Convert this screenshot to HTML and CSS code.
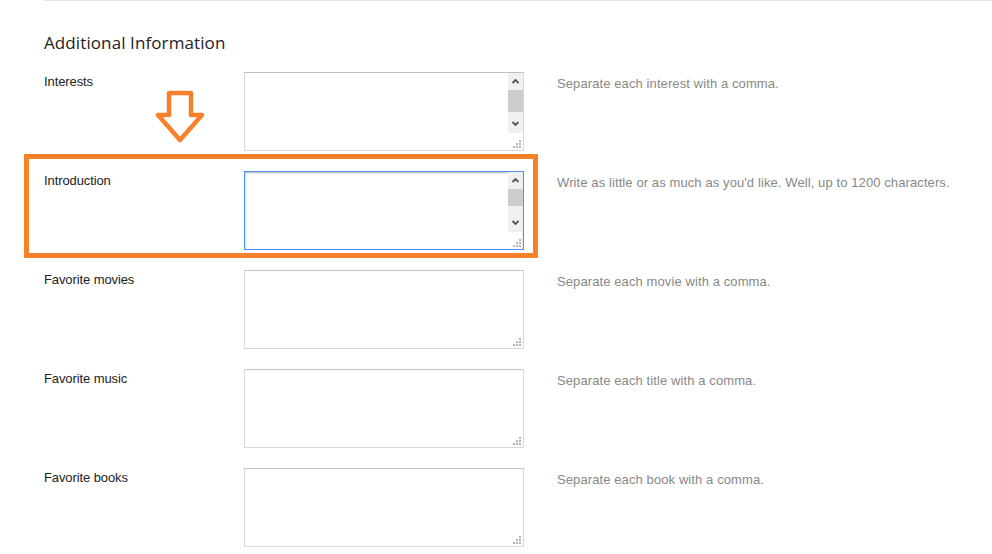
FILE: index.html
```html
<!DOCTYPE html>
<html lang="en">
<head>
    <meta charset="UTF-8">
    <title>Additional Information</title>
    <link rel="stylesheet" href="styles.css">
</head>
<body>
<div class="page">
    <div class="rule"></div>
    <h2 class="section-title">Additional Information</h2>

    <div class="form">
        <div class="row">
            <label class="label" for="interests">Interests</label>
            <div class="field">
                <textarea class="input" id="interests"></textarea>
                <span class="scrollbar">
                    <svg class="chevron" width="7" height="5" viewBox="0 0 7 5"><polyline points="0.5,4 3.5,1 6.5,4"/></svg>
                    <span class="thumb thumb-tall"></span>
                    <svg class="chevron chevron-down" width="7" height="5" viewBox="0 0 7 5"><polyline points="0.5,1 3.5,4 6.5,1"/></svg>
                </span>
                <svg class="grip" width="8" height="8" viewBox="0 0 8 8"><rect x="6" y="0" width="2" height="2"/><rect x="3" y="3" width="2" height="2"/><rect x="6" y="3" width="2" height="2"/><rect x="0" y="6" width="2" height="2"/><rect x="3" y="6" width="2" height="2"/><rect x="6" y="6" width="2" height="2"/></svg>
            </div>
            <div class="hint">Separate each interest with a comma.</div>
        </div>

        <div class="row">
            <label class="label" for="intro">Introduction</label>
            <div class="field">
                <textarea class="input is-focused" id="intro"></textarea>
                <span class="scrollbar">
                    <svg class="chevron" width="7" height="5" viewBox="0 0 7 5"><polyline points="0.5,4 3.5,1 6.5,4"/></svg>
                    <span class="thumb"></span>
                    <svg class="chevron chevron-down" width="7" height="5" viewBox="0 0 7 5"><polyline points="0.5,1 3.5,4 6.5,1"/></svg>
                </span>
                <svg class="grip" width="8" height="8" viewBox="0 0 8 8"><rect x="6" y="0" width="2" height="2"/><rect x="3" y="3" width="2" height="2"/><rect x="6" y="3" width="2" height="2"/><rect x="0" y="6" width="2" height="2"/><rect x="3" y="6" width="2" height="2"/><rect x="6" y="6" width="2" height="2"/></svg>
            </div>
            <div class="hint">Write as little or as much as you'd like. Well, up to 1200 characters.</div>
        </div>

        <div class="row">
            <label class="label" for="movies">Favorite movies</label>
            <div class="field">
                <textarea class="input" id="movies"></textarea>
                <svg class="grip" width="8" height="8" viewBox="0 0 8 8"><rect x="6" y="0" width="2" height="2"/><rect x="3" y="3" width="2" height="2"/><rect x="6" y="3" width="2" height="2"/><rect x="0" y="6" width="2" height="2"/><rect x="3" y="6" width="2" height="2"/><rect x="6" y="6" width="2" height="2"/></svg>
            </div>
            <div class="hint">Separate each movie with a comma.</div>
        </div>

        <div class="row">
            <label class="label" for="music">Favorite music</label>
            <div class="field">
                <textarea class="input" id="music"></textarea>
                <svg class="grip" width="8" height="8" viewBox="0 0 8 8"><rect x="6" y="0" width="2" height="2"/><rect x="3" y="3" width="2" height="2"/><rect x="6" y="3" width="2" height="2"/><rect x="0" y="6" width="2" height="2"/><rect x="3" y="6" width="2" height="2"/><rect x="6" y="6" width="2" height="2"/></svg>
            </div>
            <div class="hint">Separate each title with a comma.</div>
        </div>

        <div class="row">
            <label class="label" for="books">Favorite books</label>
            <div class="field">
                <textarea class="input" id="books"></textarea>
                <svg class="grip" width="8" height="8" viewBox="0 0 8 8"><rect x="6" y="0" width="2" height="2"/><rect x="3" y="3" width="2" height="2"/><rect x="6" y="3" width="2" height="2"/><rect x="0" y="6" width="2" height="2"/><rect x="3" y="6" width="2" height="2"/><rect x="6" y="6" width="2" height="2"/></svg>
            </div>
            <div class="hint">Separate each book with a comma.</div>
        </div>
    </div>

    <!-- annotation -->
    <div class="highlight"></div>
    <svg class="arrow" width="52" height="56" viewBox="0 0 52 56">
        <polygon points="14,4 36,4 36,26 47,26 25,51 3,26 14,26"/>
    </svg>
</div>
</body>
</html>
```

FILE: styles.css
```css
body {
    margin: 0;
    background-color: white;
    font-family: "Liberation Sans", Arial, sans-serif;
}

.page {
    position: relative;
    padding-left: 44px;
    height: 554px;
    overflow: hidden;
}

.rule {
    border-top: 1px solid #e5e5e5;
}

.section-title {
    margin: 32px 0 19px;
    font-family: "Open Sans", sans-serif;
    font-size: 17px;
    font-weight: normal;
    letter-spacing: 0.1px;
    line-height: 20px;
    color: #222;
}

.form {
    display: grid;
    row-gap: 20px;
}

.row {
    display: grid;
    grid-template-columns: 200px 280px 1fr;
}

.label {
    padding-top: 1px;
    font-size: 13px;
    line-height: 18px;
    letter-spacing: -0.1px;
    color: #222;
}

.hint {
    padding: 3px 0 0 33px;
    font-size: 13px;
    line-height: 18px;
    letter-spacing: 0.1px;
    color: #888;
}

.field {
    position: relative;
    width: 280px;
    height: 79px;
}

.input {
    display: block;
    box-sizing: border-box;
    width: 280px;
    height: 79px;
    margin: 0;
    padding: 4px;
    border: 1px solid #d9d9d9;
    border-top-color: #c0c0c0;
    border-radius: 0;
    resize: none;
    overflow: hidden;
    outline: none;
    font-family: "Liberation Sans", Arial, sans-serif;
    font-size: 13px;
}

.input.is-focused {
    border-color: #4d90fe;
    box-shadow: inset 0 1px 2px rgba(0, 0, 0, 0.3);
}

.scrollbar {
    position: absolute;
    top: 1px;
    right: 1px;
    width: 15px;
    height: 60px;
    background-color: #f0f0f0;
    display: flex;
    flex-direction: column;
    align-items: center;
}

.chevron {
    margin-top: 6px;
    fill: none;
    stroke: #505050;
    stroke-width: 1.8;
}

.chevron-down {
    margin-top: auto;
    margin-bottom: 7px;
}

.thumb {
    margin-top: 6px;
    width: 15px;
    height: 17px;
    background-color: #cdcdcd;
}

.thumb.thumb-tall {
    height: 22px;
}

.grip {
    position: absolute;
    right: 3px;
    bottom: 3px;
    fill: #b4b4b4;
}

.highlight {
    position: absolute;
    left: 24px;
    top: 154px;
    width: 504px;
    height: 94px;
    border: 5px solid #f7812b;
}

.arrow {
    position: absolute;
    left: 155px;
    top: 89px;
    fill: white;
    stroke: #f7812b;
    stroke-width: 4.5;
    stroke-linejoin: round;
}
```
